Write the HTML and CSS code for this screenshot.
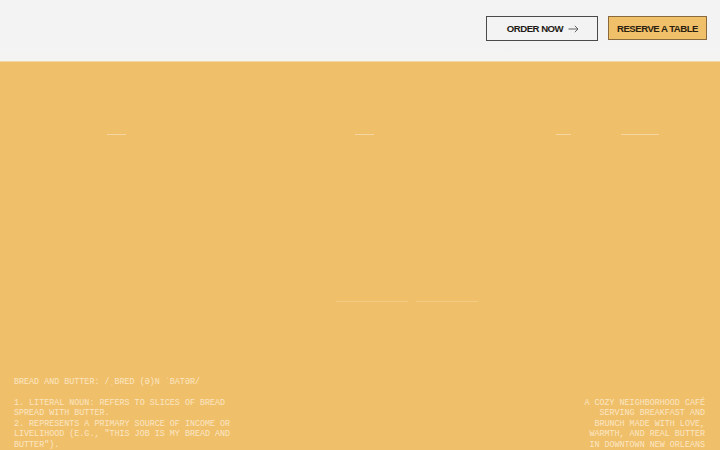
FILE: index.html
```html
<!DOCTYPE html>
<html>
<head>
<meta charset="utf-8">
<link rel="stylesheet" href="styles.css">
</head>
<body>
<header class="header">
  <nav class="actions">
    <a class="btn btn-outline">ORDER NOW
      <svg class="arrow" width="11" height="8" viewBox="0 0 11 8"><path d="M0.5 4H10M6.8 0.8L10 4L6.8 7.2" fill="none" stroke="#555" stroke-width="0.9"/></svg>
    </a>
    <a class="btn btn-fill">RESERVE A TABLE</a>
  </nav>
</header>
<main class="hero">
  <div class="ghost-row top">
    <span class="ghost" style="width:19px"></span>
    <span class="ghost" style="width:19px"></span>
    <span class="ghost-pair"><span class="ghost" style="width:15px"></span><span class="ghost" style="width:38px"></span></span>
  </div>
  <div class="ghost-row mid">
    <span class="ghost" style="width:72px"></span>
    <span class="ghost" style="width:62px"></span>
  </div>
  <div class="foot">
    <div class="definition">
      <p>BREAD AND BUTTER: /ˌBRED (Ə)N ˈBATƏR/</p>
      <p>1. LITERAL NOUN: REFERS TO SLICES OF BREAD<br>SPREAD WITH BUTTER.<br>2. REPRESENTS A PRIMARY SOURCE OF INCOME OR<br>LIVELIHOOD (E.G., "THIS JOB IS MY BREAD AND<br>BUTTER").</p>
    </div>
    <div class="tagline">
      <p>A COZY NEIGHBORHOOD CAFÉ<br>SERVING BREAKFAST AND<br>BRUNCH MADE WITH LOVE,<br>WARMTH, AND REAL BUTTER<br>IN DOWNTOWN NEW ORLEANS</p>
    </div>
  </div>
</main>
</body>
</html>
```
FILE: styles.css
```css
* { box-sizing: border-box; }
html, body { margin: 0; padding: 0; }
body {
  width: 720px;
  height: 450px;
  overflow: hidden;
  background: #f0bf6a;
  font-family: "Liberation Sans", Arial, sans-serif;
}
.header {
  height: 62px;
  background: linear-gradient(#f3f3f3 0, #f3f3f3 48px, #f4f4f2 62px);
  border-bottom: 1px solid #f3d7a6;
  display: flex;
  justify-content: flex-end;
  align-items: flex-start;
  padding: 16px 13px 0 0;
}
.actions {
  display: flex;
  gap: 10px;
}
.btn {
  height: 25px;
  display: flex;
  align-items: center;
  gap: 5px;
  font-weight: bold;
  font-size: 9.6px;
  letter-spacing: -0.5px;
  color: #1e1a14;
  border: 1px solid #4a4a4a;
}
.btn-outline {
  width: 112px;
  justify-content: center;
  background: #f3f3f3;
  padding: 0 0 0 2px;
}
.btn-fill {
  width: 99px;
  height: 24px;
  justify-content: center;
  background: #f0bf6a;
  border-color: #8a6a3a;
  color: #2a1e0e;
}
.arrow { display: block; }
.hero {
  height: 387px;
  display: flex;
  flex-direction: column;
}
.ghost-row {
  display: flex;
}
.ghost-row.top {
  margin-top: 72px;
  height: 2px;
  padding-left: 107px;
  gap: 229px;
}
.ghost-row.top .ghost:nth-child(2) { margin-right: -47px; }
.ghost-pair { display: flex; gap: 50px; }
.ghost-row.mid {
  margin-top: 165px;
  height: 2px;
  padding-left: 336px;
  gap: 8px;
}
.ghost {
  display: block;
  height: 1px;
  background: #f6d6a0;
}
.ghost-row.mid .ghost { background: #f3cb84; }
.foot {
  margin-top: auto;
  display: flex;
  justify-content: space-between;
  align-items: flex-end;
  padding: 0 15px 0 14px;
  font-family: "Liberation Mono", "DejaVu Sans Mono", monospace;
  font-size: 8.4px;
  line-height: 10.4px;
  color: #fbe6c3;
  margin-bottom: -1px;
}
.foot p { margin: 0; }
.definition p + p { margin-top: 10.4px; }
.tagline { text-align: right; }
```
